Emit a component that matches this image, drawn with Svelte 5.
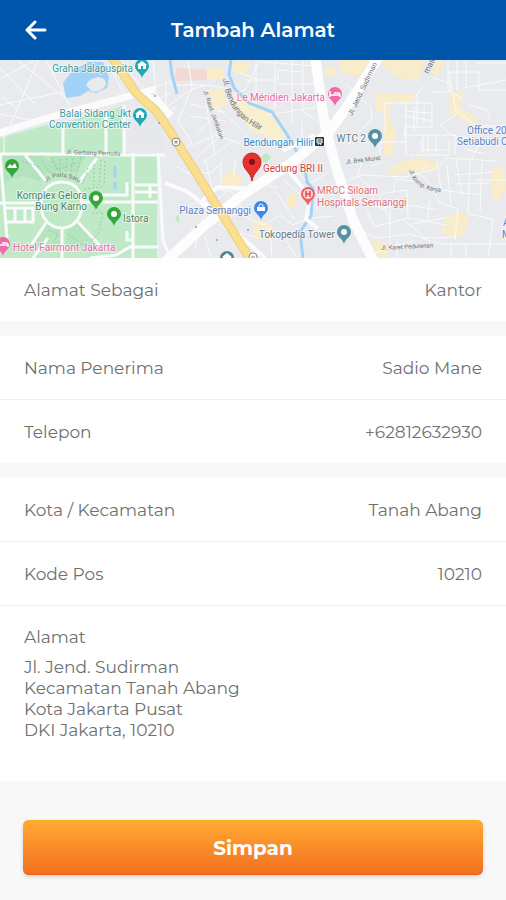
<script lang="ts">
  let kind = $state('Kantor');
  let recipient = $state('Sadio Mane');
  let phone = $state('+62812632930');
  let city = $state('Tanah Abang');
  let postcode = $state('10210');
  let address = $state(
    'Jl. Jend. Sudirman\nKecamatan Tanah Abang\nKota Jakarta Pusat\nDKI Jakarta, 10210'
  );

  // x / y is the tip of the pin
  const pins = [
    { x: 142, y: 18, color: '#1fa9b5', icon: 'house' },
    { x: 140, y: 67, color: '#1fa9b5', icon: 'house' },
    { x: 12, y: 118, color: '#35a53c', icon: 'tree' },
    { x: 96, y: 150, color: '#35a53c', icon: 'dot' },
    { x: 114, y: 166, color: '#35a53c', icon: 'dot' },
    { x: 3, y: 196, color: '#f268a8', icon: 'bed' },
    { x: 335, y: 46, color: '#f268a8', icon: 'bed' },
    { x: 308, y: 146, color: '#ef5f63', icon: 'hospital' },
    { x: 261, y: 160, color: '#4285e8', icon: 'bag' },
    { x: 375, y: 88, color: '#5690a6', icon: 'dot' },
    { x: 344, y: 184, color: '#5690a6', icon: 'dot' },
    { x: 227, y: 210, color: '#4a8793', icon: 'house' }
  ];

  const places = [
    { x: 133, y: 12, text: 'Graha Jalapuspita', tone: 'teal', end: true },
    { x: 131, y: 57, text: 'Balai Sidang Jkt', tone: 'teal', end: true },
    { x: 131, y: 68, text: 'Convention Center', tone: 'teal', end: true },
    { x: 87, y: 139, text: 'Komplex Gelora', tone: 'green', end: true },
    { x: 87, y: 150, text: 'Bung Karno', tone: 'green', end: true },
    { x: 123, y: 162, text: 'Istora', tone: 'green' },
    { x: 13, y: 191, text: 'Hotel Fairmont Jakarta', tone: 'pink' },
    { x: 325, y: 41, text: 'Le Méridien Jakarta', tone: 'pink', end: true },
    { x: 314, y: 86, text: 'Bendungan Hilir', tone: 'sky', end: true },
    { x: 263, y: 112, text: 'Gedung BRI II', tone: 'red' },
    { x: 251, y: 154, text: 'Plaza Semanggi', tone: 'blue', end: true },
    { x: 317, y: 134, text: 'MRCC Siloam', tone: 'rose' },
    { x: 317, y: 146, text: 'Hospitals Semanggi', tone: 'rose' },
    { x: 335, y: 178, text: 'Tokopedia Tower', tone: 'slate', end: true },
    { x: 366, y: 82, text: 'WTC 2', tone: 'slate', end: true },
    { x: 467, y: 74, text: 'Office 20', tone: 'blue' },
    { x: 457, y: 85, text: 'Setiabudi O', tone: 'blue' },
    { x: 503, y: 166, text: 'A', tone: 'blue' },
    { x: 502, y: 178, text: 'M', tone: 'blue' }
  ];

  const streets = [
    { id: 'st-hilir', d: 'M223 19C227 44 236 60 266 73', text: 'Jl. Bendungan Hilir', size: 8 },
    { id: 'st-raya', d: 'M203 31L224 90', text: 'Jl. Raud. Jambatan', size: 6 },
    { id: 'st-jend', d: 'M352 56L384 -10', text: 'Jl. Jend. Sudirman', size: 7 },
    { id: 'st-mas', d: 'M428 14L440 -10', text: 'mas', size: 8 },
    { id: 'st-pemuda', d: 'M66 94L126 96', text: 'Jl. Gerbang Pemuda', size: 6 },
    { id: 'st-pintu', d: 'M46 122Q63 110 84 126', text: 'Jl. Pintu Satu', size: 6 },
    { id: 'st-murat', d: 'M346 104L386 99', text: 'Jl. Bek Murat', size: 6 },
    { id: 'st-karya', d: 'M409 110Q413 130 442 132', text: 'Jl. Komp. Karya', size: 6 },
    { id: 'st-karet', d: 'M381 190L440 187', text: 'Jl. Karet Pedurenan', size: 6 }
  ];

  function goBack() {
    history.back();
  }
</script>

<div class="screen">
  <header class="bar">
    <button class="bar__back" type="button" onclick={goBack} aria-label="Kembali">
      <svg viewBox="0 0 24 20" aria-hidden="true">
        <path d="M21 10H3M11 2L3 10L11 18" />
      </svg>
    </button>
    <h1 class="bar__title">Tambah Alamat</h1>
  </header>

  <svg class="map" viewBox="0 0 506 198" role="img" aria-label="Peta lokasi">
    <rect width="506" height="198" fill="#e9eaed" />

    <!-- parks -->
    <path d="M0 78L43 66L62 63L123 46V93H157V198H0Z" fill="#c0eac7" />
    <path d="M127 55L160 52L165 91L127 91Z" fill="#e6e8eb" />
    <path d="M3 95L40 92L52 104L42 121L22 116L4 122ZM54 95H86L77 113L62 110L50 114L44 107Z" fill="#b3e3bc" />
    <path d="M45 162L62 168V190H28ZM66 168L80 161L99 184L66 191Z" fill="#b5e4be" />
    <path d="M260 98L266 93L271 97L266 104Z" fill="#bfe8c5" />
    <path d="M175 158l4 -4v10z" fill="#bfe8c5" />

    <!-- water -->
    <path d="M63 23L72 11L88 2L103 2L109 17L107 28L96 33L88 31L80 36L66 38Z" fill="#a3d2f8" />
    <path d="M86 25Q89 18 99 17Q107 19 106 25Q100 34 91 31Z" fill="#e9eaed" />
    <path d="M115 106V117M115 122V129" class="water" />

    <!-- built-up areas -->
    <path d="M176 8L207 10V20L175 21Z" fill="#f4d8d3" />
    <path d="M207 8H223V20H207ZM226 2H250L247 15L235 13ZM324 7H335V16H325ZM208 31L223 28L228 45L211 50Z" fill="#f8ecca" />
    <path d="M234 31L253 40L276 59L287 78L279 82L251 70L234 46Z" fill="#f8efcf" />
    <path d="M222 119L229 109L243 118L240 126L227 128ZM286 137L295 132L298 145L288 148ZM254 160L268 162L279 178L253 180Z" fill="#f8ecca" />
    <path d="M340 0H374L357 17L340 12ZM380 0H425L418 20L399 18L386 9ZM437 0L445 2L436 16L430 11Z" fill="#f8ecca" />
    <path d="M376 34H414V42H390V60L396 70L392 95H384V52L376 51ZM449 34L461 30V48L478 58L473 66L449 52ZM386 111L406 99L421 98L438 102V110L413 111L394 115Z" fill="#f8ecca" />
    <path d="M483 112L503 106L506 128L498 142L491 136V112ZM446 157L462 151L470 161L462 177L441 174ZM371 179L386 184L389 198H376Z" fill="#f8ecca" />

    <!-- minor roads -->
    <g class="lane">
      <path d="M0 19L35 0M0 8L36 45M17 0L65 38M0 45L62 32M38 0L10 66M46 0L73 52M0 54L30 60M110 7L127 40M127 10L155 40M153 0L156 35M137 33L176 20" />
      <path d="M168 46L190 30L206 25L244 31L260 0M170 25L206 25M188 0L192 28L178 61L192 83L179 94M190 44L223 52M190 56L226 61M204 31L215 95M216 46L242 70M193 85L216 75L241 84M196 98L224 72M202 103L235 80M222 50L198 72" />
      <path d="M246 20H278V10L303 12M256 1V40M275 0V49M292 0V64M303 0V52L318 61M279 24H317M278 39H308M268 55L316 47M302 61V78M262 2L317 6M240 13L260 20" />
      <path d="M345 23L371 48L372 58L349 84M349 35L338 55M384 43H432V67H405V82H380V95M385 42V74M406 42V96M405 51L431 53M417 34V68M424 26L413 39M403 75H455V94M423 75V93M432 32H450V12H480M433 18L452 24M448 0V30L463 39M457 0V30M466 0V26M476 3H506M479 13V30H506M463 28L506 20M451 24L456 51L477 66H506M468 45L487 50L490 61M456 54L440 65L451 75L482 81M404 56L433 61M414 47V72M424 47V65" />
      <path d="M421 80V90H447M428 76V92M436 76V92M449 81V95H410M465 89L485 94M481 81L471 100" />
      <path d="M349 98L362 104L357 116L379 134L390 161M337 125L361 115L405 117L435 109L447 98L496 101M371 106L385 101M414 111L427 120L440 143L458 149L455 180M421 111L429 104M437 99L441 130L481 135M447 105L451 146M456 99L462 135M470 99L468 154L493 159L488 198M475 120H506M482 101L480 152M455 115L494 112M455 124L490 123M356 136L383 149L397 143L438 150M367 149L374 167L409 158L446 165M381 134L407 130L408 157M390 146V190M402 158L425 178L457 177M412 164L449 157M353 167L376 178L410 174L440 184H506M373 193L413 181M420 122L396 119L393 133M451 183V198M466 183V198M397 181V198M427 160L430 140" />
      <path d="M176 106L211 128L232 132L248 158L264 165L280 155L292 165L310 158L334 156M187 112L211 113L222 102M205 98L212 128M225 132L203 157L195 188M248 130L259 122L277 128M276 131L295 160M283 119L306 140L312 168M181 127L197 140M184 149L211 135M230 170L259 178M270 165L272 198M286 180L296 197M330 111L309 124L289 103M323 133L308 156M205 176L211 198M238 180L219 164M221 103V124M236 99L233 117" />
      <path d="M0 35L16 48M4 72L4 93M166 21V55M156 40L171 33M166 55L176 47" />
    </g>
    <g class="lane lane--wide">
      <path d="M0 94H46L120 95H165M63 63V94M106 53V94M124 45V95M0 93L7 178M0 143H37M83 142H158M133 93V198M5 148H33V162H5M15 148V162M25 148V162M102 135H127V122M135 125H158M135 132H157M158 93L163 180L170 198M48 178L33 198M62 167V198M78 162L104 190M46 163L28 190M79 122L97 98M46 121L25 95M90 198L116 195L130 187H158M127 171V180H132M150 125V138" />
    </g>
    <path d="M62 122C76 122 82 132 82 145C82 157 74 168 62 168C49 168 41 158 41 145C41 132 48 122 62 122Z" fill="#c0eac7" stroke="#f8fcf9" stroke-width="3" />
    <g class="walk">
      <path d="M42 102L54 117M50 98L62 114M60 99V117M67 98L65 117M73 98L70 119M81 98L75 120M88 108L83 124M94 104V126M101 100L99 125M105 101L104 126M48 170L58 174L51 187M68 174L85 187M70 184L91 192M97 147L103 154L98 174L91 181M92 153H104" />
      <path d="M22 101L40 107M52 97L57 110L76 103M84 129L102 127M84 111L91 118" />
    </g>

    <!-- rivers -->
    <path d="M170 0L172 15L177 34M231 0L229 14L234 28L249 43L272 52L286 73L298 94M305 108L307 122L313 129L311 156L300 172L303 198" class="water" />

    <!-- main roads -->
    <path d="M-4 74L54 56L133 35L156 39L171 56M134 35L155 29" stroke="#fbfbfc" stroke-width="7" />
    <path d="M165 202L205 165L241 136L291 103L329 72L353 38L379 -4" class="avenue" />
    <path d="M315 -4L322 47L325 66L336 107L353 160L374 202" class="avenue" />
    <path d="M322 59L336 64M258 129L218 127L202 141L221 155M283 91L315 75M286 107L310 137L306 159L318 169M165 123L188 132L219 157L265 198" stroke="#fbfbfc" stroke-width="4" />
    <path d="M111 -4L136 33L156 51L168 68L188 100L220 151L252 202" stroke="#efcf7e" stroke-width="9" />
    <path d="M111 -4L136 33L156 51L168 68L188 100L220 151L252 202" stroke="#fbdf91" stroke-width="7" />
    <g fill="#fff" stroke="#8d8792" stroke-width="1">
      <circle cx="176" cy="82" r="4" />
      <circle cx="253" cy="197" r="4" />
      <path d="M174 82H178M176 80V84M251 197H255" />
    </g>
    <g fill="#9298bd">
      <circle cx="196" cy="167" r="1" />
      <circle cx="217" cy="180" r="1" />
      <circle cx="248" cy="170" r="1" />
      <circle cx="155" cy="36" r="1" />
      <circle cx="159" cy="63" r="1" />
    </g>

    {#each streets as street (street.id)}
      <path id={street.id} d={street.d} fill="none" />
      <text class="street" font-size={street.size}>
        <textPath href="#{street.id}">{street.text}</textPath>
      </text>
    {/each}

    {#each pins as pin}
      <g transform="translate({pin.x} {pin.y})">
        <path d="M0 0C-1 -5 -7 -7 -7 -12A7 7 0 1 1 7 -12C7 -7 1 -5 0 0Z" fill={pin.color} />
        {#if pin.icon === 'dot'}
          <circle cy="-12" r="3" fill="#fff" />
        {:else if pin.icon === 'house'}
          <path d="M0 -17L5 -13H4V-9H1V-12H-1V-9H-4V-13H-5Z" fill="#fff" />
        {:else if pin.icon === 'tree'}
          <path d="M-5 -10L-2 -14L0 -12L3 -15L5 -10Z" fill="#fff" />
        {:else if pin.icon === 'bed'}
          <path d="M-5 -15V-9M-5 -11H5V-9M-1 -13H3Q5 -13 5 -11" stroke="#fff" stroke-width="1.5" fill="none" />
        {:else if pin.icon === 'hospital'}
          <circle cy="-12" r="5" fill="#fbd5d5" />
          <path d="M-2 -15V-9M2 -15V-9M-2 -12H2" stroke="#e5484d" stroke-width="1.5" />
        {:else}
          <path d="M-4 -13H4V-9H-4Z" fill="#fff" />
          <path d="M-2 -13V-14A2 2 0 0 1 2 -14V-13" stroke="#fff" />
        {/if}
      </g>
    {/each}

    <rect x="315" y="77" width="9" height="9" rx="1" fill="#26323c" />
    <path d="M317 79H322V83H317ZM318 85L319 83M321 85L320 83M317 81H322" stroke="#fff" stroke-width="1" fill="none" />

    {#each places as place}
      <text class="place place--{place.tone}" class:place--end={place.end} x={place.x} y={place.y}>
        {place.text}
      </text>
    {/each}

    <path
      d="M252 121C251 112 243 110 243 102A9 9 0 1 1 261 102C261 110 253 112 252 121Z"
      fill="#e5322d"
      stroke="#bd2723"
    />
    <circle cx="252" cy="102" r="3" fill="#7c1512" />
  </svg>

  <form class="form" onsubmit={(e) => e.preventDefault()}>
    <div class="group">
      <div class="row">
        <label for="kind">Alamat Sebagai</label>
        <input id="kind" bind:value={kind} />
      </div>
    </div>

    <div class="group">
      <div class="row">
        <label for="recipient">Nama Penerima</label>
        <input id="recipient" bind:value={recipient} />
      </div>
      <div class="row">
        <label for="phone">Telepon</label>
        <input id="phone" type="tel" bind:value={phone} />
      </div>
    </div>

    <div class="group">
      <div class="row">
        <label for="city">Kota / Kecamatan</label>
        <input id="city" bind:value={city} />
      </div>
      <div class="row">
        <label for="postcode">Kode Pos</label>
        <input id="postcode" inputmode="numeric" bind:value={postcode} />
      </div>
      <div class="row row--stacked">
        <label for="address">Alamat</label>
        <textarea id="address" rows="4" bind:value={address}></textarea>
      </div>
    </div>

    <div class="actions">
      <button class="save" type="submit">Simpan</button>
    </div>
  </form>
</div>

<style>
  :global(body) {
    margin: 0;
    background: #f8f8f8;
  }
  .screen {
    display: flex;
    flex-direction: column;
    min-height: 100vh;
    color: #707070;
    font-family: Montserrat, Inter, sans-serif;
    font-size: 17px;
    line-height: 24px;
  }

  .bar {
    display: grid;
    grid-template-columns: 48px 1fr 48px;
    align-items: center;
    height: 60px;
    padding: 0 12px;
    background: #0056ab;
    color: #fff;
  }
  .bar__back {
    display: grid;
    place-items: center;
    height: 48px;
    border: 0;
    padding: 0;
    background: none;
    color: inherit;
    cursor: pointer;
  }
  .bar__back svg {
    width: 24px;
    height: 20px;
    fill: none;
    stroke: currentColor;
    stroke-width: 3;
    stroke-linecap: round;
    stroke-linejoin: round;
  }
  .bar__title {
    margin: 0;
    font-size: 20px;
    font-weight: 600;
    text-align: center;
  }

  .map {
    display: block;
    width: 100%;
    height: auto;
    fill: none;
    font-family: Roboto, sans-serif;
  }
  .lane {
    stroke: #f9fafb;
    stroke-width: 1;
  }
  .lane--wide {
    stroke-width: 3;
  }
  .walk {
    stroke: #94cda0;
    stroke-width: 1;
    stroke-dasharray: 2 2;
  }
  .water {
    stroke: #a3d2f8;
    stroke-width: 3;
  }
  .avenue {
    stroke: #fdfdfe;
    stroke-width: 10;
  }
  .street {
    fill: #6f7378;
  }
  .place {
    font-size: 10px;
    paint-order: stroke;
    stroke: rgb(255 255 255 / 0.6);
    stroke-width: 2;
  }
  .place--end {
    text-anchor: end;
  }
  .place--teal {
    fill: #3c9ba4;
  }
  .place--green {
    fill: #4b8463;
  }
  .place--pink {
    fill: #ee69aa;
  }
  .place--sky {
    fill: #3190cd;
  }
  .place--red {
    fill: #d8433f;
  }
  .place--blue {
    fill: #5a83c7;
  }
  .place--rose {
    fill: #dc6f78;
  }
  .place--slate {
    fill: #647d8a;
  }

  .form {
    display: flex;
    flex: 1;
    flex-direction: column;
    gap: 15px;
  }
  .group {
    background: #fff;
  }
  .row {
    display: flex;
    align-items: center;
    gap: 16px;
    min-height: 63px;
    padding: 0 24px;
  }
  .row + .row {
    border-top: 1px solid #f0f0f0;
  }
  .row label {
    flex: none;
  }
  input,
  textarea {
    flex: 1;
    min-width: 0;
    border: 0;
    padding: 0;
    background: none;
    color: inherit;
    font: inherit;
    outline: 0;
  }
  input {
    text-align: right;
  }
  .row--stacked {
    flex-direction: column;
    align-items: stretch;
    gap: 8px;
    padding: 19px 24px 40px;
  }
  textarea {
    display: block;
    flex: none;
    line-height: 21px;
    resize: none;
    overflow: hidden;
  }

  /* the form gap above is part of the grey strip around the button */
  .actions {
    padding: 24px 23px;
  }
  .save {
    display: block;
    width: 100%;
    height: 55px;
    border: 0;
    border-radius: 6px;
    background: linear-gradient(#ffab33, #f26f20);
    box-shadow:
      inset 0 1px 0 #f9ac22,
      inset 0 -1px 0 #ec6412,
      0 2px 4px rgb(0 0 0 / 0.15);
    color: #fff;
    font: inherit;
    font-size: 20px;
    font-weight: 700;
    cursor: pointer;
  }
  .row:focus-within label {
    color: #0056ab;
  }
  button:focus-visible {
    outline: 2px solid #fff;
    outline-offset: -4px;
  }
</style>
